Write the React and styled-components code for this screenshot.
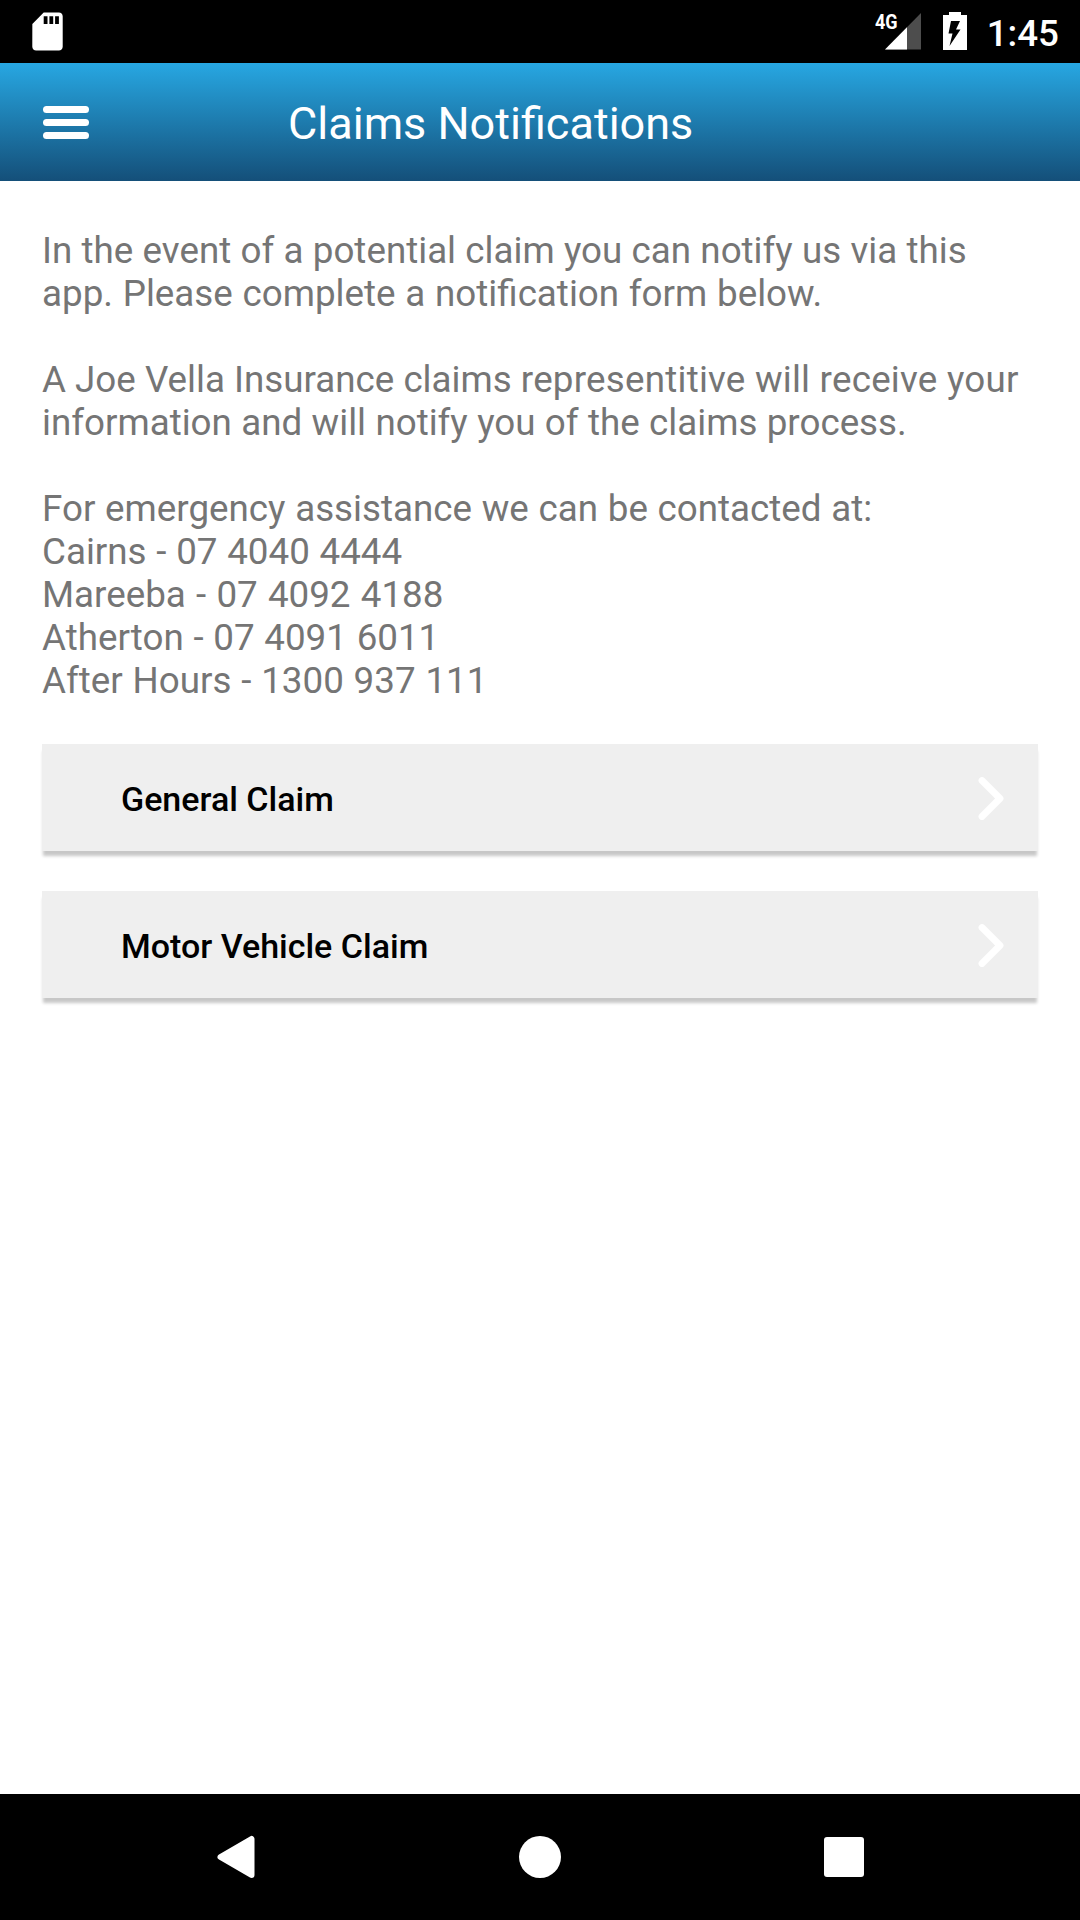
import React from 'react';
import styled, { createGlobalStyle } from 'styled-components';

const GlobalStyle = createGlobalStyle`
  body {
    margin: 0;
    background: #fff;
    font-family: Roboto, "Liberation Sans", sans-serif;
  }
`;

const Screen = styled.div`
  display: flex;
  flex-direction: column;
  width: 1080px;
  height: 1920px;
  overflow: hidden;
  background: #fff;
`;

const StatusBar = styled.div`
  display: flex;
  justify-content: space-between;
  flex: none;
  height: 63px;
  padding: 0 21px 0 24px;
  box-sizing: border-box;
  background: #000;
  color: #fff;
`;

const StatusGroup = styled.div`
  display: flex;
  align-items: flex-start;
`;

const StatusIcon = styled.svg`
  display: block;
  height: 63px;
`;

const Network = styled.span`
  width: 24px;
  margin: 11px -14px 0 0;
  font-size: 20px;
  font-weight: 700;
  line-height: 23px;
  transform: scaleX(0.9);
  transform-origin: left;
  z-index: 1;
`;

const Time = styled.span`
  margin-left: 20px;
  font-size: 36.75px;
  font-weight: 500;
  line-height: 67px;
`;

const Header = styled.header`
  display: grid;
  grid-template-columns: 288px 1fr;
  align-items: center;
  flex: none;
  height: 118px;
  background: linear-gradient(#27a7e2, #144f79);
`;

const MenuButton = styled.button`
  display: flex;
  flex-direction: column;
  gap: 6px;
  width: 46px;
  margin-left: 43px;
  padding: 0;
  border: 0;
  background: none;
`;

const MenuBar = styled.span`
  height: 7px;
  border-radius: 3.5px;
  background: #fff;
`;

const Title = styled.h1`
  margin: 4px 0 0;
  color: #fff;
  font-size: 45px;
  font-weight: 400;
  line-height: 52px;
`;

const Content = styled.main`
  flex: 1;
  padding: 48px 42px 0;
`;

const Paragraph = styled.p`
  margin: 0 0 43px;
  color: #757575;
  font-size: 36.75px;
  line-height: 43px;
  white-space: nowrap;

  &:last-of-type {
    margin-bottom: 42px;
  }
`;

const Line = styled.span`
  display: block;
  word-spacing: ${({ $gap }) => $gap}px;
`;

const Loose = styled.span`
  letter-spacing: 0.23px;
`;

const ClaimList = styled.div`
  display: flex;
  flex-direction: column;
  gap: 40px;
`;

const ClaimButton = styled.button`
  display: flex;
  align-items: center;
  justify-content: space-between;
  width: 100%;
  height: 107px;
  padding: 0 34px 0 79px;
  border: 0;
  background: #efefef;
  box-shadow: 0 6px 3px -1px rgba(0, 0, 0, 0.22);
  color: #000;
  font-family: inherit;
  font-size: 34px;
  font-weight: 500;
`;

const ClaimLabel = styled.span`
  padding-top: 2px;
`;

const NavBar = styled.nav`
  display: flex;
  align-items: center;
  justify-content: space-between;
  flex: none;
  height: 126px;
  padding: 0 216px;
  box-sizing: border-box;
  background: #000;
`;

const paragraphs = [
  [
    { text: 'In the event of a potential claim you can notify us via this', gap: 0.16 },
    { text: 'app. Please complete a notification form below.', gap: 0.65 },
  ],
  [
    { text: 'A Joe Vella Insurance claims ', loose: 'representitive will receive your', gap: 0 },
    { text: 'information and will notify you of the claims process.', gap: 0.25 },
  ],
  [
    { text: 'For emergency assistance we can be contacted at:', gap: 0.6 },
    { text: 'Cairns - 07 4040 4444', gap: 0.6 },
    { text: 'Mareeba - 07 4092 4188', gap: 1.1 },
    { text: 'Atherton - 07 4091 6011', gap: 0.6 },
    { text: 'After Hours - 1300 937 111', gap: 0.7 },
  ],
];

const claims = ['General Claim', 'Motor Vehicle Claim'];

const SdCard = () => (
  <StatusIcon width="46" viewBox="0 0 46 63" fill="#fff">
    <path
      transform="translate(0.7 8.7) scale(1.9)"
      d="M18 2h-8L4.02 8 4 20c0 1.1.9 2 2 2h12c1.1 0 2-.9 2-2V4c0-1.1-.9-2-2-2zm-6 6h-2V4h2v4zm3 0h-2V4h2v4zm3 0h-2V4h2v4z"
    />
  </StatusIcon>
);

const Signal = () => (
  <StatusIcon width="36" viewBox="0 0 36 63">
    <path d="M0 49.5L36 13V49.5z" fill="#4d4d4d" />
    <path d="M0 49.5L22 27.2V49.5z" fill="#fff" />
  </StatusIcon>
);

const Battery = () => (
  <StatusIcon width="24" viewBox="0 0 24 63">
    <path d="M6 12h12v3h6v35H0V15h6z" fill="#fff" />
    <path d="M8 21h9l-4 8.5h4.5L6.5 46l3-12.5H5.5z" fill="#000" />
  </StatusIcon>
);

const Chevron = () => (
  <svg width="26" height="44" viewBox="0 0 26 44" fill="none">
    <path
      d="M4 4.5L22 22.5L4 40.5"
      stroke="#fff"
      strokeWidth="6.8"
      strokeLinecap="round"
      strokeLinejoin="round"
    />
  </svg>
);

class App extends React.Component {
  render() {
    return (
      <Screen>
        <GlobalStyle />
        <StatusBar>
          <SdCard />
          <StatusGroup>
            <Network>4G</Network>
            <Signal />
            <StatusIcon width="22" />
            <Battery />
            <Time>1:45</Time>
          </StatusGroup>
        </StatusBar>
        <Header>
          <MenuButton aria-label="Menu">
            <MenuBar />
            <MenuBar />
            <MenuBar />
          </MenuButton>
          <Title>Claims Notifications</Title>
        </Header>
        <Content>
          {paragraphs.map((lines) => (
            <Paragraph key={lines[0].text}>
              {lines.map(({ text, loose, gap }) => (
                <Line key={text} $gap={gap}>
                  {text}
                  {loose && <Loose>{loose}</Loose>}
                </Line>
              ))}
            </Paragraph>
          ))}
          <ClaimList>
            {claims.map((claim) => (
              <ClaimButton key={claim}>
                <ClaimLabel>{claim}</ClaimLabel>
                <Chevron />
              </ClaimButton>
            ))}
          </ClaimList>
        </Content>
        <NavBar>
          <svg width="40" height="44" viewBox="0 0 40 44">
            <path
              d="M4.5 22L35.5 4V40z"
              fill="#fff"
              stroke="#fff"
              strokeWidth="6"
              strokeLinejoin="round"
            />
          </svg>
          <svg width="42" height="42" viewBox="0 0 42 42">
            <circle cx="21" cy="21" r="21" fill="#fff" />
          </svg>
          <svg width="40" height="40" viewBox="0 0 40 40">
            <rect width="40" height="40" rx="3" fill="#fff" />
          </svg>
        </NavBar>
      </Screen>
    );
  }
}

export default App;
